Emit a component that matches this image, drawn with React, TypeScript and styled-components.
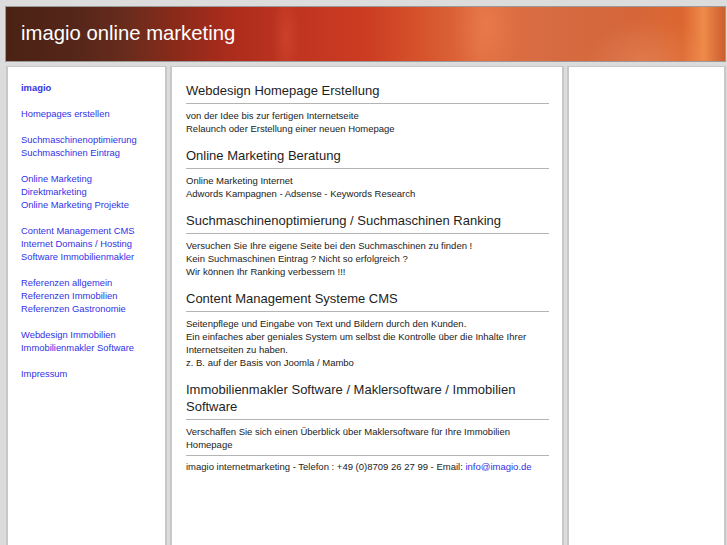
import React from "react"
import styled, { createGlobalStyle } from "styled-components"

const GlobalStyle = createGlobalStyle`
  html, body {
    margin: 0;
    padding: 0;
    background: #dcdcdc;
    font-family: "Liberation Sans", Arial, Helvetica, sans-serif;
  }
`

const Page = styled.div`
  padding: 6px 1px 0 5px;
  height: 545px;
  box-sizing: border-box;
  overflow: hidden;
`

const Header = styled.div`
  height: 56px;
  box-sizing: border-box;
  border: 1px solid #9a9a9a;
  display: flex;
  align-items: center;
  padding-left: 15px;
  background:
    radial-gradient(ellipse 90px 70px at 640px 60px, rgba(255, 190, 150, 0.25), transparent 70%),
    radial-gradient(ellipse 50px 90px at 480px 20px, rgba(255, 150, 100, 0.3), transparent 70%),
    radial-gradient(ellipse 20px 70px at 280px 30px, rgba(230, 90, 60, 0.35), transparent 70%),
    linear-gradient(
      90deg,
      #4a2213 0%,
      #55261a 10%,
      #6a2c1c 17%,
      #8c2a1a 24%,
      #ab2c1c 31%,
      #bf3420 40%,
      #cc3c22 50%,
      #d6542c 58%,
      #de6c3e 66%,
      #d86c42 74%,
      #d4663a 86%,
      #dc6630 94%,
      #ee8a4a 97%,
      #cc5e30 100%
    );
`

const Title = styled.h1`
  margin: 0 0 2px;
  font-size: 20.3px;
  font-weight: normal;
  color: #ffffff;
`

const Columns = styled.div`
  display: grid;
  grid-template-columns: 161px 394px 1fr;
  gap: 3px;
  margin-top: 4px;
  padding-left: 1px;
  height: 500px;
`

const Panel = styled.div`
  background: #ffffff;
  border: 2px solid #c8c8c8;
  border-top-width: 1px;
  border-bottom: none;
`

const Nav = styled(Panel)`
  padding: 14px 8px 0 13px;
`

const NavGroup = styled.div`
  margin-bottom: 13px;
`

const NavLink = styled.a<{ $strong?: boolean }>`
  display: block;
  font-size: 9.4px;
  line-height: 13px;
  color: #3232e6;
  text-decoration: none;
  font-weight: ${(p) => (p.$strong ? "bold" : "normal")};
`

const Content = styled(Panel)`
  padding: 15px 13px 0 14px;
`

const Heading = styled.h2`
  margin: 0 0 5px;
  padding-bottom: 4px;
  font-size: 13px;
  line-height: 17px;
  font-weight: normal;
  color: #1e1e1e;
  border-bottom: 1px solid #b4b4b4;
`

const Text = styled.p<{ $last?: boolean }>`
  margin: 0 0 ${(p) => (p.$last ? "4px" : "12px")};
  font-size: 9.5px;
  line-height: 13px;
  color: #222222;
`

const Footer = styled.div`
  border-top: 1px solid #b4b4b4;
  padding-top: 4px;
  font-size: 9.5px;
  line-height: 13px;
  color: #222222;

  & a {
    color: #3232e6;
    text-decoration: none;
  }
`

const navGroups: { label: string; strong?: boolean }[][] = [
  [{ label: "imagio", strong: true }],
  [{ label: "Homepages erstellen" }],
  [{ label: "Suchmaschinenoptimierung" }, { label: "Suchmaschinen Eintrag" }],
  [
    { label: "Online Marketing" },
    { label: "Direktmarketing" },
    { label: "Online Marketing Projekte" },
  ],
  [
    { label: "Content Management CMS" },
    { label: "Internet Domains / Hosting" },
    { label: "Software Immobilienmakler" },
  ],
  [
    { label: "Referenzen allgemein" },
    { label: "Referenzen Immobilien" },
    { label: "Referenzen Gastronomie" },
  ],
  [{ label: "Webdesign Immobilien" }, { label: "Immobilienmakler Software" }],
  [{ label: "Impressum" }],
]

const sections = [
  {
    title: "Webdesign Homepage Erstellung",
    lines: [
      "von der Idee bis zur fertigen Internetseite",
      "Relaunch oder Erstellung einer neuen Homepage",
    ],
  },
  {
    title: "Online Marketing Beratung",
    lines: ["Online Marketing Internet", "Adwords Kampagnen - Adsense - Keywords Research"],
  },
  {
    title: "Suchmaschinenoptimierung / Suchmaschinen Ranking",
    lines: [
      "Versuchen Sie Ihre eigene Seite bei den Suchmaschinen zu finden !",
      "Kein Suchmaschinen Eintrag ? Nicht so erfolgreich ?",
      "Wir können Ihr Ranking verbessern !!!",
    ],
  },
  {
    title: "Content Management Systeme CMS",
    lines: [
      "Seitenpflege und Eingabe von Text und Bildern durch den Kunden.",
      "Ein einfaches aber geniales System um selbst die Kontrolle über die Inhalte Ihrer Internetseiten zu haben.",
      "z. B. auf der Basis von Joomla / Mambo",
    ],
  },
  {
    title: "Immobilienmakler Software / Maklersoftware / Immobilien Software",
    lines: ["Verschaffen Sie sich einen Überblick über Maklersoftware für Ihre Immobilien Homepage"],
  },
]

const App: React.FC = () => {
  return (
    <>
      <GlobalStyle />
      <Page>
        <Header>
          <Title>imagio online marketing</Title>
        </Header>
        <Columns>
          <Nav>
            {navGroups.map((group, i) => (
              <NavGroup key={i}>
                {group.map((item) => (
                  <NavLink key={item.label} href="#" $strong={item.strong}>
                    {item.label}
                  </NavLink>
                ))}
              </NavGroup>
            ))}
          </Nav>
          <Content>
            {sections.map((s, i) => (
              <React.Fragment key={s.title}>
                <Heading>{s.title}</Heading>
                <Text $last={i === sections.length - 1}>
                  {s.lines.map((l, j) => (
                    <React.Fragment key={j}>
                      {l}
                      {j < s.lines.length - 1 && <br />}
                    </React.Fragment>
                  ))}
                </Text>
              </React.Fragment>
            ))}
            <Footer>
              imagio internetmarketing - Telefon : +49 (0)8709 26 27 99 - Email:{" "}
              <a href="#">info@imagio.de</a>
            </Footer>
          </Content>
          <Panel />
        </Columns>
      </Page>
    </>
  )
}

export default App
